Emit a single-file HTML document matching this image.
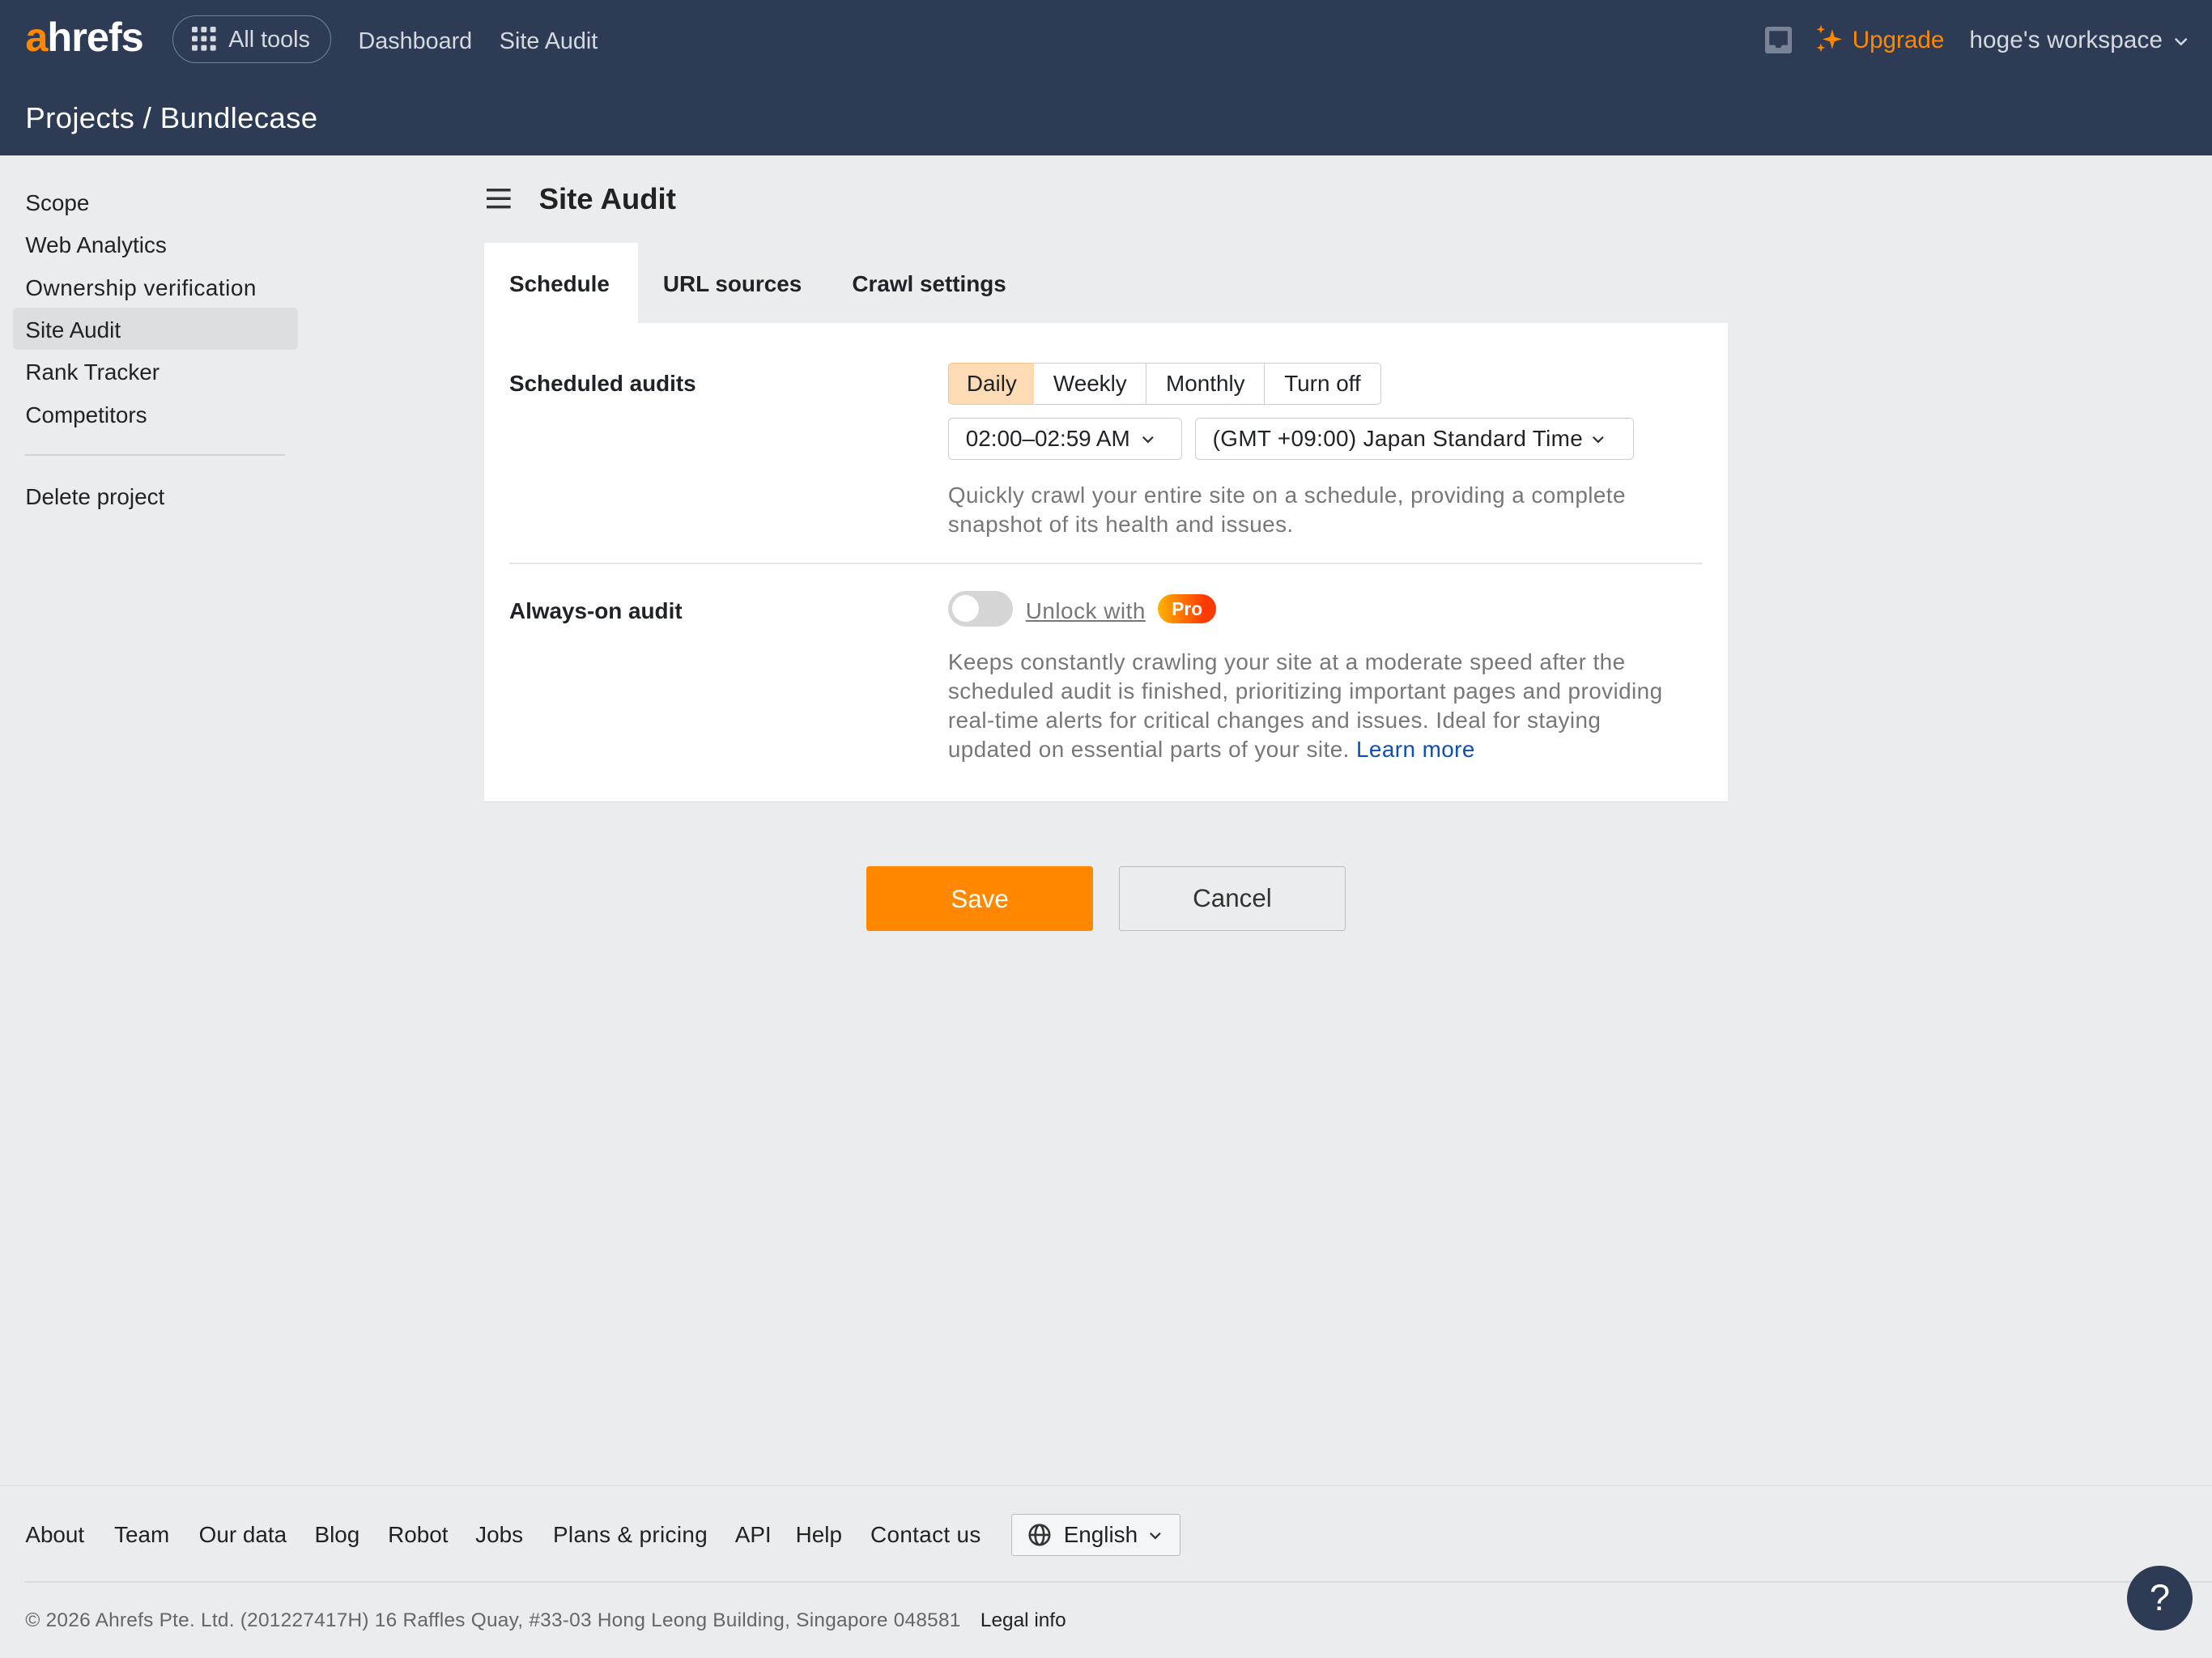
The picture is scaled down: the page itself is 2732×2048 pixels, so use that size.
<!DOCTYPE html>
<html><head><meta charset="utf-8"><style>
*{box-sizing:border-box;margin:0;padding:0}
html,body{width:2732px;height:2048px;overflow:hidden;background:#ebecee}
#w{zoom:1.74235;width:1568px;height:1176px;position:relative;font-family:"Liberation Sans",sans-serif;color:#1f2328;font-size:16px}
.a{position:absolute;white-space:nowrap}
.t{transform:translateY(1px)}
.hd{position:absolute;left:0;top:0;width:1568px;height:110px;background:#2e3b55}
.nav{color:#d5d9e0;font-size:16.5px}
.side{font-size:16px;color:#222;top:0}
.b{font-weight:bold}
.gray{color:#777;font-size:16px;line-height:20.7px;letter-spacing:0.25px}
.seg{position:absolute;top:257px;height:30px;border:1px solid #ccc;background:#fff;font-size:16px;line-height:29px;text-align:center}
.dd{position:absolute;top:296px;height:30px;border:1px solid #ccc;border-radius:3px;background:#fff;font-size:16px;line-height:29px;padding-left:12px}
.ft{font-size:16px;color:#222;top:1079px}
.ch{display:inline-block;vertical-align:middle;margin-left:4px}
</style></head><body><div id="w">
<div class="hd"></div>
<div class="a b" style="left:18px;top:9px;font-size:29px;color:#fff;letter-spacing:-0.6px"><span style="color:#ff8800">a</span>hrefs</div>
<div class="a" style="left:122px;top:11px;width:113px;height:34px;border:1px solid #7a8396;border-radius:17px"></div>
<svg class="a" style="left:136px;top:19px" width="17" height="17"><g fill="#d5d9e0"><rect x="0" y="0" width="4" height="4" rx="1"/><rect x="6.5" y="0" width="4" height="4" rx="1"/><rect x="13" y="0" width="4" height="4" rx="1"/><rect x="0" y="6.5" width="4" height="4" rx="1"/><rect x="6.5" y="6.5" width="4" height="4" rx="1"/><rect x="13" y="6.5" width="4" height="4" rx="1"/><rect x="0" y="13" width="4" height="4" rx="1"/><rect x="6.5" y="13" width="4" height="4" rx="1"/><rect x="13" y="13" width="4" height="4" rx="1"/></g></svg>
<div class="a nav" style="left:162px;top:19px">All tools</div>
<div class="a nav" style="left:254px;top:20px">Dashboard</div>
<div class="a nav" style="left:354px;top:20px">Site Audit</div>
<svg class="a" style="left:1251px;top:19px" width="19" height="19"><rect x="0" y="0" width="19" height="19" rx="2" fill="#7a8396"/><path d="M3 3h13v10h-4l-1 2h-3l-1-2H3z" fill="#2e3b55"/></svg>
<svg class="a" style="left:1287px;top:18px" width="20" height="20" fill="#ff8800"><path d="M12 3l1.6 5.4L19 10l-5.4 1.6L12 17l-1.6-5.4L5 10l5.4-1.6z"/><path d="M4 0l.8 2.2L7 3l-2.2.8L4 6l-.8-2.2L1 3l2.2-.8z"/><path d="M4 13l.8 2.2L7 16l-2.2.8L4 19l-.8-2.2L1 16l2.2-.8z"/></svg>
<div class="a" style="left:1313px;top:19px;font-size:17px;color:#ff8800">Upgrade</div>
<div class="a nav" style="left:1396px;top:19px;font-size:17px;letter-spacing:0.1px">hoge's workspace<svg class="ch" width="10" height="6" style="margin-left:8px"><path d="M1 1l4 4 4-4" stroke="#d5d9e0" stroke-width="1.4" fill="none"/></svg></div>
<div class="a" style="left:18px;top:72px;font-size:21px;color:#fff;letter-spacing:0.2px">Projects / Bundlecase</div>

<div class="a" style="left:9px;top:218px;width:202px;height:30px;background:#dcdee2;border-radius:3px"></div>
<div class="a side" style="left:18px;top:135px">Scope</div>
<div class="a side" style="left:18px;top:165px">Web Analytics</div>
<div class="a side" style="left:18px;top:195px;letter-spacing:0.3px">Ownership verification</div>
<div class="a side" style="left:18px;top:225px">Site Audit</div>
<div class="a side" style="left:18px;top:255px">Rank Tracker</div>
<div class="a side" style="left:18px;top:285px">Competitors</div>
<div class="a" style="left:18px;top:322px;width:184px;height:1px;background:#cfd2d6"></div>
<div class="a side" style="left:18px;top:343px">Delete project</div>

<svg class="a" style="left:345px;top:134px" width="17" height="14"><g stroke="#333" stroke-width="2"><path d="M0 1h17M0 7h17M0 13h17"/></g></svg>
<div class="a b" style="left:382px;top:129px;font-size:21px;color:#222">Site Audit</div>
<div class="a" style="left:343px;top:172px;width:109px;height:58px;background:#fff"></div>
<div class="a b" style="left:361px;top:192px">Schedule</div>
<div class="a b" style="left:470px;top:192px">URL sources</div>
<div class="a b" style="left:604px;top:192px">Crawl settings</div>
<div class="a" style="left:343px;top:229px;width:882px;height:340px;background:#fff;border-bottom:1px solid #ddd"></div>
<div class="a b" style="left:361px;top:263px">Scheduled audits</div>
<div class="seg" style="left:672px;width:62px;background:#fddcb5;border-color:#f5c48d;border-radius:3px 0 0 3px">Daily</div>
<div class="seg" style="left:733px;width:80px;border-left:none">Weekly</div>
<div class="seg" style="left:812px;width:85px">Monthly</div>
<div class="seg" style="left:896px;width:83px;border-radius:0 3px 3px 0">Turn off</div>
<div class="dd" style="left:672px;width:166px">02:00–02:59 AM<svg class="ch" width="9" height="6" style="margin-left:8px"><path d="M1 1l3.5 3.5L8 1" stroke="#333" stroke-width="1.3" fill="none"/></svg></div>
<div class="dd" style="left:847px;width:311px;letter-spacing:0.2px">(GMT +09:00) Japan Standard Time<svg class="ch" width="9" height="6" style="margin-left:6px"><path d="M1 1l3.5 3.5L8 1" stroke="#333" stroke-width="1.3" fill="none"/></svg></div>
<div class="a gray" style="left:672px;top:341px">Quickly crawl your entire site on a schedule, providing a complete<br>snapshot of its health and issues.</div>
<div class="a" style="left:361px;top:399px;width:846px;height:1px;background:#e6e6e6"></div>
<div class="a b" style="left:361px;top:424px">Always-on audit</div>
<div class="a" style="left:672px;top:419px;width:46px;height:25px;border-radius:13px;background:#d5d5d5"></div>
<div class="a" style="left:675px;top:422px;width:19px;height:19px;border-radius:50%;background:#fff"></div>
<div class="a" style="left:727px;top:424px;color:#777;text-decoration:underline;letter-spacing:0.3px">Unlock with</div>
<div class="a b" style="left:821px;top:421px;width:41px;height:21px;border-radius:11px;background:linear-gradient(90deg,#ffb300,#ff3a00 80%);color:#fff;font-size:13px;line-height:21px;text-align:center">Pro</div>
<div class="a gray" style="left:672px;top:459px">Keeps constantly crawling your site at a moderate speed after the<br>scheduled audit is finished, prioritizing important pages and providing<br>real-time alerts for critical changes and issues. Ideal for staying<br>updated on essential parts of your site. <span style="color:#0b50b4">Learn more</span></div>

<div class="a" style="left:614px;top:614px;width:161px;height:46px;background:#ff8800;border-radius:2px;color:#fff;font-size:18px;line-height:47px;text-align:center">Save</div>
<div class="a" style="left:793px;top:614px;width:161px;height:46px;border:1px solid #bbb;border-radius:2px;color:#333;font-size:18px;line-height:45px;text-align:center">Cancel</div>

<div class="a" style="left:0;top:1053px;width:1568px;height:1px;background:#d8dadd"></div>
<div class="a ft" style="left:18px">About</div>
<div class="a ft" style="left:81px">Team</div>
<div class="a ft" style="left:141px">Our data</div>
<div class="a ft" style="left:223px">Blog</div>
<div class="a ft" style="left:275px">Robot</div>
<div class="a ft" style="left:337px">Jobs</div>
<div class="a ft" style="left:392px;letter-spacing:0.2px">Plans &amp; pricing</div>
<div class="a ft" style="left:521px">API</div>
<div class="a ft" style="left:564px">Help</div>
<div class="a ft" style="left:617px;letter-spacing:0.2px">Contact us</div>
<div class="a" style="left:717px;top:1073px;width:120px;height:30px;border:1px solid #bbb;border-radius:2px;background:#f4f5f6"></div>
<svg class="a" style="left:729px;top:1080px" width="16" height="16" fill="none" stroke="#333" stroke-width="1.5"><circle cx="8" cy="8" r="7"/><ellipse cx="8" cy="8" rx="3" ry="7"/><path d="M1 8h14"/></svg>
<div class="a ft" style="left:754px">English<svg class="ch" width="9" height="6" style="margin-left:8px"><path d="M1 1l3.5 3.5L8 1" stroke="#333" stroke-width="1.3" fill="none"/></svg></div>
<div class="a" style="left:18px;top:1121px;width:1550px;height:1px;background:#d8dadd"></div>
<div class="a" style="left:18px;top:1141px;font-size:14px;color:#666;letter-spacing:0.15px">© 2026 Ahrefs Pte. Ltd. (201227417H) 16 Raffles Quay, #33-03 Hong Leong Building, Singapore 048581</div>
<div class="a" style="left:695px;top:1141px;font-size:14px;color:#222">Legal info</div>
<div class="a" style="left:1508px;top:1110px;width:46px;height:46px;border-radius:50%;background:#2e3b55;color:#fff;font-size:26px;line-height:46px;text-align:center">?</div>
</div></body></html>
